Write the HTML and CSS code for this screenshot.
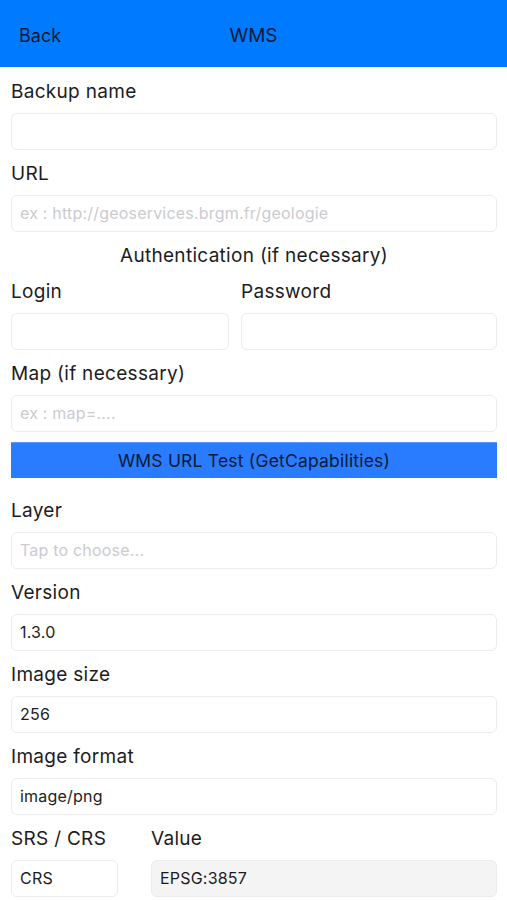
FILE: index.html
```html
<!DOCTYPE html>
<html lang="en">
<head>
  <meta charset="UTF-8" />
  <meta name="viewport" content="width=device-width, initial-scale=1" />
  <title>WMS</title>
  <link rel="stylesheet" href="styles.css">
</head>
<body>
  <header class="nav">
    <span class="nav-back">Back</span>
    <span class="nav-title">WMS</span>
    <span></span>
  </header>

  <form class="form">
    <div class="field">
      <label class="label">Backup name</label>
      <input class="input" type="text" />
    </div>

    <div class="field">
      <label class="label">URL</label>
      <input class="input" type="text" placeholder="ex : http://geoservices.brgm.fr/geologie" />
    </div>

    <div class="section-title">Authentication (if necessary)</div>

    <div class="row row-auth">
      <div class="field">
        <label class="label">Login</label>
        <input class="input" type="text" />
      </div>
      <div class="field">
        <label class="label">Password</label>
        <input class="input" type="password" />
      </div>
    </div>

    <div class="field">
      <label class="label">Map (if necessary)</label>
      <input class="input" type="text" placeholder="ex : map=...." />
    </div>

    <button class="test-btn" type="button">WMS URL Test (GetCapabilities)</button>

    <div class="field">
      <label class="label">Layer</label>
      <input class="input" type="text" placeholder="Tap to choose..." />
    </div>

    <div class="field">
      <label class="label">Version</label>
      <input class="input" type="text" value="1.3.0" />
    </div>

    <div class="field">
      <label class="label">Image size</label>
      <input class="input" type="text" value="256" />
    </div>

    <div class="field">
      <label class="label">Image format</label>
      <input class="input" type="text" value="image/png" />
    </div>

    <div class="row row-srs">
      <div class="field">
        <label class="label">SRS / CRS</label>
        <input class="input" type="text" value="CRS" />
      </div>
      <div class="field">
        <label class="label">Value</label>
        <input class="input input-readonly" type="text" value="EPSG:3857" readonly />
      </div>
    </div>
  </form>
</body>
</html>
```

FILE: styles.css
```css
body {
  margin: 0;
  font-family: Inter, "Liberation Sans", sans-serif;
  background: #fff;
  color: #1c1c1e;
}
.nav {
  height: 67px;
  background-color: #007AFF;
  display: grid;
  grid-template-columns: 1fr auto 1fr;
  align-items: center;
  padding: 3px 19px 0;
  box-sizing: border-box;
  color: #0b1a33;
}
.nav-back {
  font-size: 18px;
}
.nav-title {
  font-size: 19px;
}
.form {
  display: flex;
  flex-direction: column;
  gap: 12px;
  padding: 12.5px 10px 0 11px;
}
.field {
  display: flex;
  flex-direction: column;
}
.label {
  font-size: 19px;
  letter-spacing: 0.3px;
  line-height: 24px;
  margin-bottom: 9.5px;
  color: #1c1c1e;
}
.input {
  height: 36.5px;
  box-sizing: border-box;
  border: 1px solid #ececee;
  border-radius: 6px;
  background: #fff;
  padding: 0 8px;
  font-family: inherit;
  font-size: 16px;
  letter-spacing: 0.2px;
  color: #1c1c1e;
  outline: none;
  width: 100%;
}
.input::placeholder {
  color: #cbcbd0;
}
.input-readonly {
  background: #f4f4f5;
}
.section-title {
  text-align: center;
  font-size: 19px;
  letter-spacing: 0.3px;
  line-height: 24px;
}
.row {
  display: grid;
}
.row-auth {
  grid-template-columns: 218px 1fr;
  gap: 12px;
}
.row-srs {
  grid-template-columns: 107px 1fr;
  gap: 33px;
}
.test-btn {
  margin: -2px 0 8.5px;
  height: 36.5px;
  background-color: #297BFF;
  border: none;
  border-top: 1px solid #5b9bff;
  color: #0b1a33;
  font-family: inherit;
  font-size: 17.5px;
  letter-spacing: 0.2px;
  padding: 0;
}
```
